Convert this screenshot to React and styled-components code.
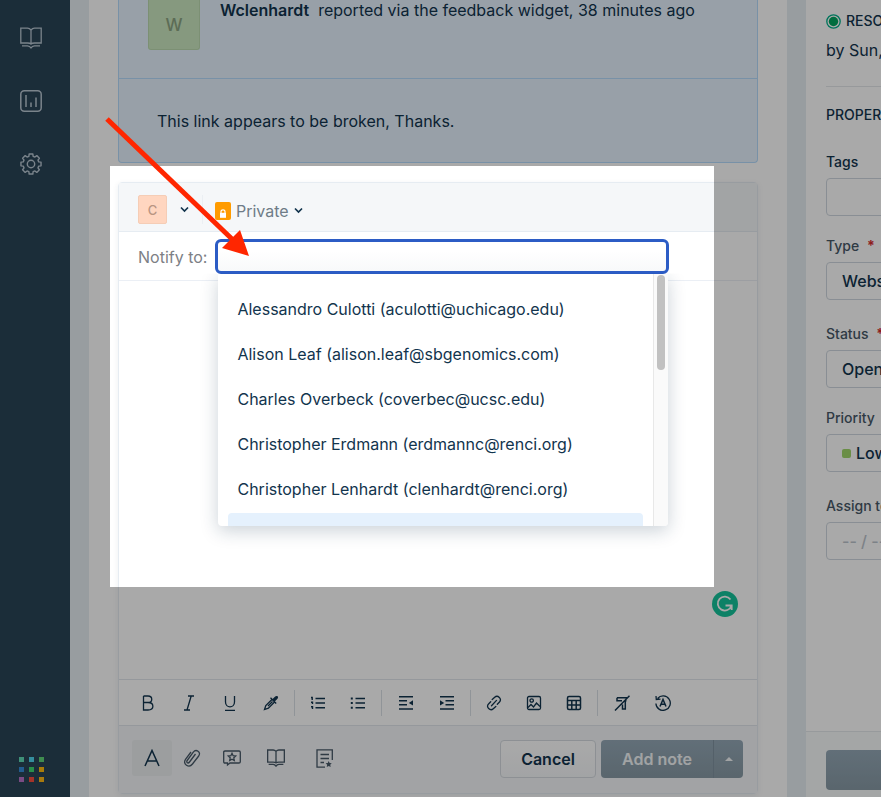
import React from "react";
import styled, { createGlobalStyle, css } from "styled-components";

const GlobalStyle = createGlobalStyle`
  *, *::before, *::after { box-sizing: border-box; }
  body { margin: 0; background: #fff; }
  body, button, input, select {
    font-family: Inter, "Liberation Sans", sans-serif;
    font-size: 16px;
    color: #12344d;
  }
  button { padding: 0; border: 0; background: none; cursor: pointer; }
  h2, p, ul { margin: 0; padding: 0; }
`;

const Page = styled.div`
  position: relative;
  display: grid;
  grid-template-columns: 70px minmax(0, 1fr) 75px;
  height: 100vh;
  min-height: 640px;
  overflow: hidden;
`;

/* Left navigation */
const Sidebar = styled.nav`
  display: flex;
  flex-direction: column;
  align-items: center;
  justify-content: space-between;
  padding: 27px 8px 15px 0;
  background: #2a4457;
`;
const NavList = styled.div`
  display: grid;
  gap: 41px;
`;
const NavLink = styled.a`
  display: flex;
  color: #b9c7d2;
`;
const AppsButton = styled.button`
  display: grid;
  grid-template-columns: repeat(3, 5px);
  gap: 5px;
`;
const AppDot = styled.span`
  height: 5px;
  background: ${(p) => p.$color};
`;

/* Conversation */
const Main = styled.main`
  display: flex;
  flex-direction: column;
  gap: 19px;
  min-width: 0;
  padding: 0 29px 3px;
  border: solid #e6edf2;
  border-width: 0 19px;
  background: #fff;
`;
const Message = styled.article`
  border: 1px solid #b6dbfc;
  border-top: 0;
  border-radius: 0 0 4px 4px;
  background: #e5f2fd;
`;
const MessageHead = styled.header`
  display: flex;
  gap: 20px;
  height: 79px;
  padding: 0 29px;
  border-bottom: 1px solid #b6dbfc;
`;
const Avatar = styled.div`
  display: flex;
  align-items: center;
  justify-content: center;
  flex: none;
  width: ${(p) => (p.$large ? 52 : 29)}px;
  height: ${(p) => (p.$large ? 50 : 29)}px;
  border: 1px solid ${(p) => (p.$large ? "#bcdab0" : "#f5cdb6")};
  border-top-width: ${(p) => (p.$large ? 0 : 1)}px;
  border-radius: ${(p) => (p.$large ? "0 0 3px 3px" : "2px")};
  background: ${(p) => (p.$large ? "#cbe7c0" : "#ffd6c0")};
  color: ${(p) => (p.$large ? "#8ca482" : "#b99582")};
  font-size: ${(p) => (p.$large ? 17 : 13)}px;
  font-weight: 500;
`;
const Byline = styled.p`
  line-height: 20px;
  white-space: nowrap;
  strong { margin-right: 9px; font-weight: 600; }
`;
const MessageBody = styled.p`
  padding: 32px 38px 31px;
  line-height: 20px;
`;

/* Note editor */
const Editor = styled.section`
  display: flex;
  flex: 1;
  flex-direction: column;
  border: 1px solid #e6ecf2;
  border-radius: 4px;
  box-shadow: 0 2px 6px rgba(18, 52, 77, 0.08);
`;
const EditorHead = styled.header`
  display: flex;
  align-items: center;
  height: 49px;
  padding: 5px 19px 0;
  border-bottom: 1px solid #e6ecf2;
  background: #f5f7f9;
`;
const AuthorButton = styled.button`
  display: flex;
  align-items: center;
  gap: 13px;
  height: 29px;
  padding-right: 13px;
  border-right: 1px solid #ebeff3;
`;
const PrivacyButton = styled.button`
  display: flex;
  align-items: center;
  gap: 5px;
  margin-left: 12px;
  padding-top: 2px;
  color: #6f7c87;
`;
const LockBadge = styled.span`
  display: flex;
  align-items: flex-end;
  justify-content: center;
  width: 16px;
  height: 18px;
  padding-bottom: 2px;
  border-radius: 2px;
  background: #ff9b00;
`;
const NotifyRow = styled.div`
  display: flex;
  align-items: center;
  gap: 8px;
  height: 49px;
  padding: 0 88px 0 19px;
  border-bottom: 1px solid #ebeff5;
`;
const NotifyLabel = styled.label`
  flex: none;
  padding-top: 2px;
  color: #7d8085;
`;
const Combo = styled.div`
  position: relative;
  flex: 1;
`;
const NotifyInput = styled.input`
  display: block;
  width: 100%;
  height: 35px;
  padding: 0 12px;
  border: 3px solid #2c5cc5;
  border-radius: 6px;
  background: linear-gradient(#fff 30%, #f8f9fa);
  outline: 0;
`;
const Menu = styled.div`
  position: absolute;
  top: 35px;
  left: 3px;
  right: 1px;
  display: grid;
  grid-template-columns: minmax(0, 1fr) 15px;
  height: 252px;
  overflow: hidden;
  border-radius: 0 0 4px 4px;
  background: #fff;
  box-shadow: 0 5px 18px rgba(18, 52, 77, 0.22);
  clip-path: inset(0 -40px -40px -40px);
`;
const Options = styled.ul`
  display: grid;
  align-content: start;
  grid-auto-rows: 43px;
  gap: 2px;
  padding: 14px 10px 0;
  list-style: none;
`;
const Option = styled.li`
  padding: 0 9px;
  border-radius: 4px;
  background: ${(p) => (p.$active ? "#e5f1fd" : "transparent")};
  line-height: 43px;
  white-space: nowrap;
`;
const ScrollTrack = styled.div`
  padding: 1px 3px;
  border-left: 1px solid #e8e8e8;
  background: #fafafa;
`;
const ScrollThumb = styled.div`
  height: 95px;
  border-radius: 4px;
  background: #c1c1c1;
`;
const NoteArea = styled.div`
  display: flex;
  flex: 1;
  align-items: flex-end;
  justify-content: flex-end;
  padding: 0 19px 62px;
`;
const GrammarButton = styled.button`
  display: flex;
  align-items: center;
  justify-content: center;
  width: 26px;
  height: 26px;
  border-radius: 50%;
  background: #15c39a;
  color: #fff;
`;
const Toolbar = styled.div`
  display: flex;
  align-items: center;
  height: 46px;
  padding-left: 5px;
  border-top: 1px solid #e1e6eb;
`;
const ToolGroup = styled.div`
  display: flex;
  padding: 0 3px;
  & + & { border-left: 1px solid #d9dfe6; }
`;
const ToolButton = styled.button`
  display: flex;
  align-items: center;
  justify-content: center;
  width: ${(p) => p.$width}px;
  height: 26px;
`;
const EditorFoot = styled.footer`
  display: flex;
  align-items: flex-start;
  height: 68px;
  padding: 14px 14px 0 13px;
  border-top: 1px solid #e1e6eb;
  background: #f4f6f9;
`;
const FootTool = styled.button`
  display: flex;
  align-items: center;
  justify-content: center;
  width: ${(p) => (p.$wide ? 48 : 40)}px;
  height: 36px;
  border-radius: 3px;
  color: #475867;
  ${(p) => p.$active && css`background: #ebeef0; color: #12344d;`}
`;
const Actions = styled.div`
  display: flex;
  gap: 5px;
  margin-left: auto;
`;
const fill = css`
  background: linear-gradient(#94a8b6, #889aa5);
  color: #fff;
`;
const CancelButton = styled.button`
  width: 96px;
  height: 38px;
  border: 1px solid #d5dae0;
  border-radius: 4px;
  background: linear-gradient(#fff, #f5f7f9);
  font-weight: 600;
`;
const SplitButton = styled.div`
  display: flex;
  height: 38px;
  border-radius: 4px;
  overflow: hidden;
`;
const AddButton = styled.button`
  ${fill}
  width: 112px;
  color: #f3f6f8;
  font-weight: 600;
`;
const CaretButton = styled.button`
  ${fill}
  display: flex;
  align-items: center;
  justify-content: center;
  width: 30px;
  border-left: 1px solid #7f929f;
`;

/* Ticket properties */
const Aside = styled.aside`
  display: flex;
  flex-direction: column;
  min-width: 0;
  overflow: hidden;
  background: #fff;
  white-space: nowrap;
`;
const Properties = styled.div`
  flex: 1;
  width: 280px;
  padding: 11px 20px 0;
`;
const Due = styled.div`
  padding-bottom: 26px;
  border-bottom: 1px solid #e4e7ea;
`;
const DueTitle = styled.p`
  display: flex;
  align-items: center;
  gap: 5px;
  font-size: 14px;
  font-weight: 500;
  line-height: 20px;
`;
const DueText = styled.p`
  margin-top: 9px;
  line-height: 20px;
`;
const Heading = styled.h2`
  margin: 18px 0 27px;
  font-size: 14px;
  font-weight: 500;
  line-height: 20px;
`;
const Field = styled.div`
  display: grid;
  gap: 6px;
  margin-bottom: ${(p) => (p.$spaced ? 24 : 20)}px;
`;
const FieldLabel = styled.label`
  color: ${(p) => (p.$strong ? "#12344d" : "#475867")};
  font-size: 14px;
  font-weight: 500;
  line-height: 20px;
`;
const Required = styled.span`
  margin-left: 4px;
  color: #d72d30;
  font-weight: 700;
`;
const control = css`
  width: 100%;
  height: 38px;
  border: 1px solid #cfd7df;
  border-radius: 4px;
  background: #fff;
`;
const TextInput = styled.input`
  ${control}
  padding: 0 12px;
`;
const SelectBox = styled.div`
  ${control}
  display: flex;
  align-items: center;
  gap: 5px;
  padding-left: 15px;
`;
const PriorityMark = styled.span`
  width: 9px;
  height: 9px;
  border-radius: 2px;
  background: #a0d76a;
`;
const Select = styled.select`
  flex: 1;
  height: 36px;
  padding: 0;
  appearance: none;
  border: 0;
  background: transparent;
  color: ${(p) => (p.$muted ? "#bcc4cc" : "#12344d")};
  font-weight: 500;
`;
const AsideFoot = styled.footer`
  width: 280px;
  padding: 18px 20px 7px;
  border-top: 1px solid #e4e8ec;
  background: #f8fbfa;
`;
const UpdateButton = styled.button`
  ${fill}
  display: block;
  width: 100%;
  height: 40px;
  border-radius: 4px;
`;

/* Highlighted region and pointer */
const Spotlight = styled.div`
  position: absolute;
  top: 166px;
  left: 110px;
  width: 604px;
  height: 421px;
  box-shadow: 0 0 0 2000px rgba(0, 0, 0, 0.337);
  pointer-events: none;
`;
const Pointer = styled.svg`
  position: absolute;
  top: 110px;
  left: 100px;
  pointer-events: none;
`;

const Icon = ({ size = 16, box = 16, stroke = 1.3, children }) => (
  <svg width={size} height={size} viewBox={`0 0 ${box} ${box}`} fill="none" stroke="currentColor" strokeWidth={stroke} aria-hidden="true">
    {children}
  </svg>
);
const BookIcon = ({ size = 22, stroke = 1.3 }) => (
  <Icon size={size} box={22} stroke={stroke}>
    <path d="M11 3 Q9.500 1.200 7.500 1.200 H0.800 V16 H7.500 Q10 16 11 17 Q12 16 14.500 16 H21.200 V1.200 H14.500 Q12.500 1.200 11 3 V17" />
    <path d="M2 18.800 H7.500 Q9.800 19 11 20.800 Q12.200 19 14.500 18.800 H20" />
  </Icon>
);
const Chevron = () => (
  <svg width="9" height="7" viewBox="0 0 9 7" fill="none" stroke="#12344d" strokeWidth="1.700" aria-hidden="true">
    <path d="M1 1.500 L4.500 5 L8 1.500" />
  </svg>
);

const gearPath = (() => {
  const pts = [];
  for (let i = 0; i < 8; i++) {
    const a = (i * Math.PI) / 4;
    for (const [d, r] of [[-0.27, 8], [-0.18, 10.2], [0.18, 10.2], [0.27, 8]]) {
      pts.push(`${(11 + r * Math.cos(a + d)).toFixed(2)} ${(11 + r * Math.sin(a + d)).toFixed(2)}`);
    }
  }
  return `M${pts.join(" L")} Z`;
})();

const toolGroups = [
  { width: 41, tools: [
    ["Bold", <path d="M3.500 1 H8 C13 1 13 7.500 8 7.500 H3.500 M8 7.500 C14.500 7.500 14.500 15 8 15 H3.500 V1" />],
    ["Italic", <path d="M7 1 H13 M3 15 H9 M10.200 1 L6 15" />],
    ["Underline", <path d="M3.500 1 V7 C3.500 13.500 12.500 13.500 12.500 7 V1 M3 15.400 H13" />],
    ["Text colour", <g><path d="M9.200 4.200 L2.800 10.600 L1.500 14.500 L5.400 13.200 L11.800 6.800 M9.500 6.500 L5 11" /><path d="M7.500 2.800 L13.200 8.500 M9.800 4.800 L12.600 2 C14 1 15 2 14 3.400 L11.200 6.200 Z" fill="currentColor" /></g>],
  ] },
  { width: 40, tools: [
    ["Numbered list", <path d="M5.500 3.500 H15 M5.500 8 H15 M5.500 12.700 H15 M1 2.500 H2.200 V5 M1 7.200 H2.500 V9 M1 11.800 H2.500 V14" strokeWidth="1.400" />],
    ["Bulleted list", <g><path d="M5.500 3.500 H15 M5.500 8 H15 M5.500 12.700 H15" strokeWidth="1.500" /><path d="M0.800 3.500 H2.800 M0.800 8 H2.800 M0.800 12.700 H2.800" strokeWidth="2" /></g>],
  ] },
  { width: 41, tools: [
    ["Outdent", <g><path d="M1 1.800 H15 M1 5.800 H9 M1 9.800 H9 M1 14 H15" strokeWidth="1.500" /><path d="M15 5.200 V10.600 L10.800 7.900 Z" fill="currentColor" stroke="none" /></g>],
    ["Indent", <g><path d="M1 1.800 H15 M6.500 5.800 H15 M6.500 9.800 H15 M1 14 H15" strokeWidth="1.500" /><path d="M1 5.200 V10.600 L5.200 7.900 Z" fill="currentColor" stroke="none" /></g>],
  ] },
  { width: 40, tools: [
    ["Insert link", <path d="M6.200 4.600 L8.700 2.300 C11.700 -0.500 16.500 4 13.500 7 L11.300 9.300 M9.800 11.400 L7.300 13.700 C4.300 16.500 -0.500 12 2.500 9 L4.700 6.700 M5.500 10.700 L10.500 5.400" strokeLinecap="round" />],
    ["Insert image", <g><rect x="1.500" y="1.500" width="13" height="13" rx="1.500" /><circle cx="5.700" cy="5.500" r="1.700" /><path d="M2 12.500 L5 9.500 L7.500 12 L10.500 8 L14 11.500" /></g>],
    ["Insert table", <path d="M3 1.500 H13 Q14.500 1.500 14.500 3 V13 Q14.500 14.500 13 14.500 H3 Q1.500 14.500 1.500 13 V3 Q1.500 1.500 3 1.500 Z M1.500 5.500 H14.500 M1.500 10 H14.500 M5.800 5.500 V14.500 M10.200 5.500 V14.500" strokeWidth="1.500" />],
  ] },
  { width: 41, tools: [
    ["Clear formatting", <path d="M15.500 0.800 L1 15.500 M3 2.800 H13 M3 2.800 V5.800 H8 M8.500 9.500 V14 H11.300 V5.800 H12.500" strokeWidth="1.500" />],
    ["Restore formatting", <g><path d="M2.600 3.500 A7.200 7.200 0 1 1 0.900 8.500 M1 1 L1.300 4.500 L5.500 4.200" /><path d="M5 11.500 L8 4.500 L11 11.500 M6 9.300 H10" strokeWidth="1.500" /></g>],
  ] },
];

const people = [
  "Alessandro Culotti (aculotti@uchicago.edu)",
  "Alison Leaf (alison.leaf@sbgenomics.com)",
  "Charles Overbeck (coverbec@ucsc.edu)",
  "Christopher Erdmann (erdmannc@renci.org)",
  "Christopher Lenhardt (clenhardt@renci.org)",
];
const appColors = ["#5fd9b6", "#51d6ee", "#5fd377", "#368bd8", "#3fd870", "#ffbb0f", "#b871c8", "#f84d3f", "#fdb816"];

const fields = [
  { id: "type", label: "Type", value: "Website", required: true, spaced: true },
  { id: "status", label: "Status", value: "Open", required: true },
  { id: "priority", label: "Priority", value: "Low", mark: true, spaced: true },
  { id: "assign", label: "Assign to", value: "-- / --", muted: true },
];

export default function App() {
  return (
    <Page>
      <GlobalStyle />
      <Sidebar aria-label="Main">
        <NavList>
          <NavLink href="#solutions" aria-label="Solutions"><BookIcon /></NavLink>
          <NavLink href="#analytics" aria-label="Analytics">
            <Icon size={22} box={22} stroke={1.5}>
              <rect x="0.800" y="0.800" width="20.400" height="20.400" rx="3.500" />
              <path d="M6 5 V17 M11 12.500 V17 M16 7.500 V17" />
            </Icon>
          </NavLink>
          <NavLink href="#admin" aria-label="Admin">
            <Icon size={22} box={22} stroke={1.4}>
              <path d={gearPath} strokeLinejoin="round" />
              <circle cx="11" cy="11" r="3.700" />
            </Icon>
          </NavLink>
        </NavList>
        <AppsButton aria-label="Switch app">
          {appColors.map((c) => <AppDot key={c} $color={c} />)}
        </AppsButton>
      </Sidebar>

      <Main>
        <Message>
          <MessageHead>
            <Avatar $large>W</Avatar>
            <Byline><strong>Wclenhardt</strong>reported via the feedback widget, 38 minutes ago</Byline>
          </MessageHead>
          <MessageBody>This link appears to be broken, Thanks.</MessageBody>
        </Message>

        <Editor>
          <EditorHead>
            <AuthorButton aria-label="Author">
              <Avatar as="span">C</Avatar>
              <Chevron />
            </AuthorButton>
            <PrivacyButton>
              <LockBadge>
                <svg width="8" height="9" viewBox="0 0 8 9" aria-hidden="true">
                  <path d="M2 4 V2.600 C2 0.200 6 0.200 6 2.600 V4" fill="none" stroke="#fff" strokeWidth="1.200" />
                  <rect x="1" y="3.800" width="6" height="5" fill="#fff" />
                </svg>
              </LockBadge>
              Private
              <Chevron />
            </PrivacyButton>
          </EditorHead>
          <NotifyRow>
            <NotifyLabel htmlFor="notify">Notify to:</NotifyLabel>
            <Combo>
              <NotifyInput id="notify" role="combobox" aria-expanded="true" aria-controls="people" />
              <Menu>
                <Options id="people" role="listbox">
                  {people.map((p) => <Option key={p} role="option">{p}</Option>)}
                  <Option role="option" $active />
                </Options>
                <ScrollTrack><ScrollThumb /></ScrollTrack>
              </Menu>
            </Combo>
          </NotifyRow>
          <NoteArea>
            <GrammarButton aria-label="Check grammar">
              <Icon size={18} box={18} stroke={1.8}>
                <path d="M14.500 4.500 A7 7 0 1 0 15.500 10.500 M9.500 10.500 H15.700 V15" />
              </Icon>
            </GrammarButton>
          </NoteArea>
          <Toolbar role="toolbar" aria-label="Formatting">
            {toolGroups.map((g, i) => (
              <ToolGroup key={i}>
                {g.tools.map(([name, art]) => (
                  <ToolButton key={name} aria-label={name} $width={g.width}><Icon>{art}</Icon></ToolButton>
                ))}
              </ToolGroup>
            ))}
          </Toolbar>
          <EditorFoot>
            <FootTool aria-label="Text formatting" $active>
              <Icon size={18} box={18} stroke={1.5}><path d="M2 17 L9 1.500 L16 17 M4.500 12 H13.500" /></Icon>
            </FootTool>
            <FootTool aria-label="Attach file">
              <Icon size={18} box={18}><path d="M12.500 5 L6.500 13 C5 15 2.800 13.400 4.200 11.500 L10.300 3.200 C13 -0.500 18.500 3 15.700 7 L9.500 15 C6 19.500 -0.800 15.200 2.500 10.300 L8 3" /></Icon>
            </FootTool>
            <FootTool aria-label="Canned responses">
              <Icon size={18} box={18}>
                <path d="M2 2 H16 Q17.300 2 17.300 3.300 V12.700 Q17.300 14 16 14 H7 L4.500 16 V14 H2 Q0.700 14 0.700 12.700 V3.300 Q0.700 2 2 2 Z" />
                <path d="M9 4.300 L10.100 6.700 L12.700 7 L10.800 8.800 L11.300 11.500 L9 10.200 L6.700 11.500 L7.200 8.800 L5.300 7 L7.900 6.700 Z" />
              </Icon>
            </FootTool>
            <FootTool aria-label="Solution articles" $wide><BookIcon size={18} stroke={1.6} /></FootTool>
            <FootTool aria-label="Templates" $wide>
              <Icon size={19} box={19}>
                <path d="M17.300 11 V0.800 H2 V18.200 H10 M5.500 5.500 H14 M5.500 9.500 H14 M5.500 13.500 H9" />
                <path d="M13.700 12 L14.600 14.100 L16.800 14.300 L15.200 15.800 L15.700 18 L13.700 16.900 L11.700 18 L12.200 15.800 L10.600 14.300 L12.800 14.100 Z" fill="currentColor" stroke="none" />
              </Icon>
            </FootTool>
            <Actions>
              <CancelButton>Cancel</CancelButton>
              <SplitButton>
                <AddButton>Add note</AddButton>
                <CaretButton aria-label="More options">
                  <svg width="8" height="4" viewBox="0 0 8 4" aria-hidden="true"><path d="M4 0 L8 4 H0 Z" fill="#f3f6f8" /></svg>
                </CaretButton>
              </SplitButton>
            </Actions>
          </EditorFoot>
        </Editor>
      </Main>

      <Aside>
        <Properties>
          <Due>
            <DueTitle>
              <svg width="15" height="15" viewBox="0 0 15 15" aria-hidden="true">
                <circle cx="7.500" cy="7.500" r="6.700" fill="none" stroke="#00b08b" strokeWidth="1.300" />
                <circle cx="7.500" cy="7.500" r="4.700" fill="#00a560" />
              </svg>
              RESOLUTION DUE
            </DueTitle>
            <DueText>by Sun,</DueText>
          </Due>
          <Heading>PROPERTIES</Heading>
          <Field>
            <FieldLabel htmlFor="tags" $strong>Tags</FieldLabel>
            <TextInput id="tags" />
          </Field>
          {fields.map((f) => (
            <Field key={f.id} $spaced={f.spaced}>
              <FieldLabel htmlFor={f.id}>{f.label} {f.required && <Required>*</Required>}</FieldLabel>
              <SelectBox>
                {f.mark && <PriorityMark />}
                <Select id={f.id} $muted={f.muted}><option>{f.value}</option></Select>
              </SelectBox>
            </Field>
          ))}
        </Properties>
        <AsideFoot><UpdateButton aria-label="Update" /></AsideFoot>
      </Aside>

      <Spotlight />
      <Pointer width="160" height="160" viewBox="0 0 160 160" aria-hidden="true">
        <path d="M7 9 L133 130" stroke="#ff2600" strokeWidth="5" />
        <path d="M149 146 L140 120 L122 138 Z" fill="#ff2600" />
      </Pointer>
    </Page>
  );
}
